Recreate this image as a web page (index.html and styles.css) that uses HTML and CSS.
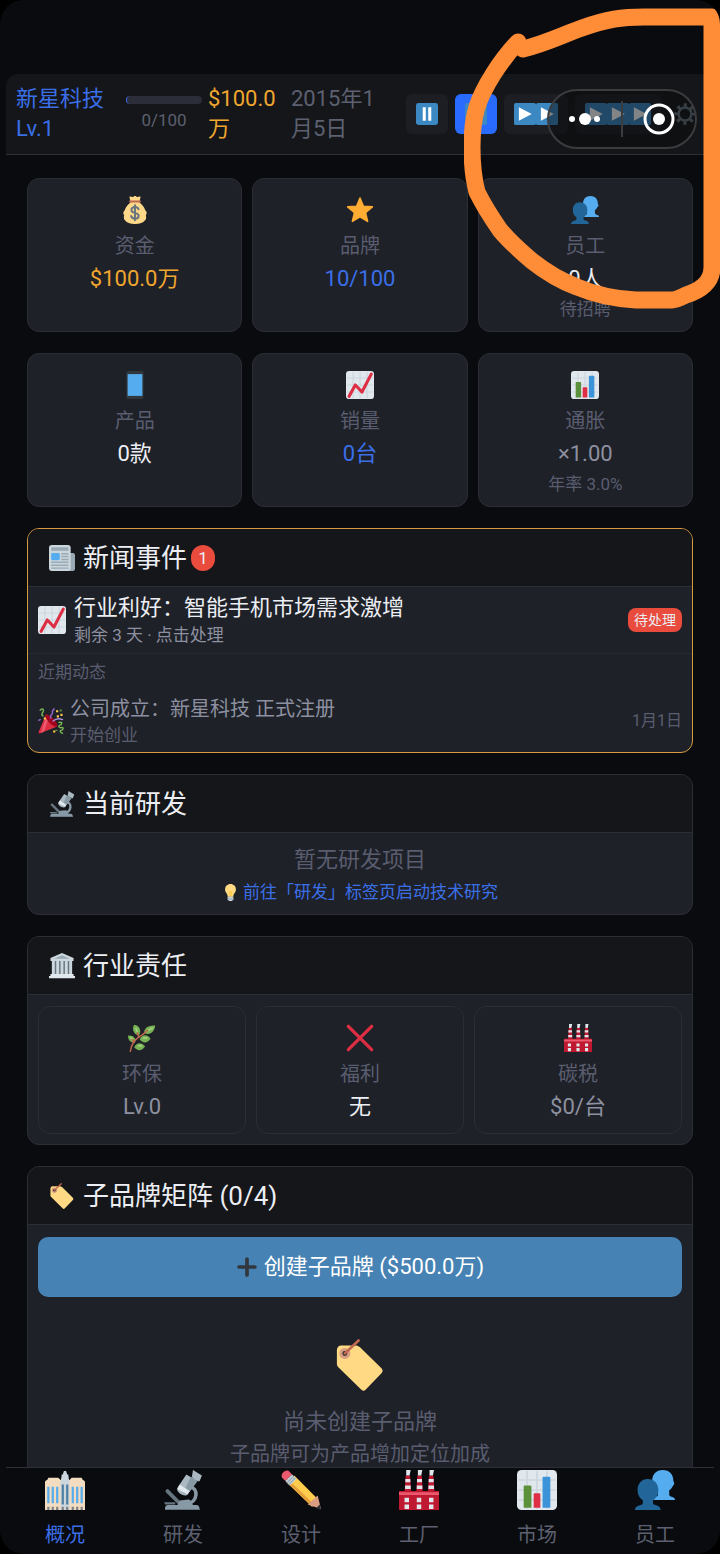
FILE: index.html
```html
<!DOCTYPE html>
<html lang="zh-CN">
<head>
    <meta charset="UTF-8">
    <meta name="viewport" content="width=device-width, initial-scale=1">
    <title>新星科技</title>
    <link rel="stylesheet" href="styles.css">
</head>
<body>
<svg class="sprite" aria-hidden="true">
    <symbol id="i-money" viewBox="0 0 36 36">
        <path fill="#fdd888" d="M31.900 24.300c1 3.200.200 6-1.300 7.300-2 2.900-6 4.400-12.600 4.400S7.400 34.500 5.400 31.600c-1.500-1.300-2.300-4.100-1.300-7.300-1.600-.8-1.500-4.300.5-5.800C6.300 13 11 9.500 13 7.500h10c2 2 6.700 5.500 8.400 11 2 1.500 2.100 5 .5 5.800z"/>
        <path fill="#fdd888" d="M12 6.500 10.800 1c1.700-.9 3 .5 4.200.2 1.200-.3 1.800-1.200 3-1.200s1.800.9 3 1.200c1.200.3 2.500-1.100 4.200-.2L24 6.500z"/>
        <path fill="#bf6952" d="M11.500 5.800h13a1.200 1.200 0 0 1 0 2.400h-13a1.200 1.200 0 0 1 0-2.400z"/>
        <path fill="none" stroke="#67757f" stroke-width="2.600" stroke-linecap="round" d="M22.500 17c-.6-2-2.400-2.800-4.500-2.800-2.700 0-4.600 1.500-4.600 3.700 0 5.300 9.300 2.300 9.300 7.500 0 2.200-2 3.700-4.700 3.700-2.500 0-4.500-1.200-5-3.300M18 11.800v19.500"/>
    </symbol>
    <symbol id="i-star" viewBox="0 0 36 36">
        <path fill="#ffac33" stroke="#ffac33" stroke-width="2" stroke-linejoin="round" d="m18 2.500 4.400 10.600 11.500.9-8.800 7.500 2.700 11.200L18 26.700l-9.800 6 2.700-11.200L2.100 14l11.500-.9z"/>
    </symbol>
    <symbol id="i-people" viewBox="0 0 36 36">
        <path fill="#55acee" d="M15.500 27c0-2.500 3-3 5-3.500V18c-2.500-1-5-4-5-8.500C15.500 4 19 0 25 0s9.500 4 9.500 9.500c0 1 .8 1.500.8 2.500 0 1.500-.8 2-1.300 2.300-.7 1.700-1.800 3-3.200 3.900v3.800c0 1 .5 1.500 1.500 1.900 2 .7 3.700 1.100 3.700 3.100z"/>
        <path fill="#226699" d="M0 36c0-3 3-4 6-4.700.8-.2 1-.8 1-1.800v-2.300C4.200 25.500 2.300 22.500 2.300 18 2.300 12 6 8 11.500 8S21 12 21 18c0 4.500-2 7.500-4.800 9.200v2.300c0 1 .3 1.500 1.300 1.800 3 .7 5.500 1.700 5.500 4.700z"/>
    </symbol>
    <symbol id="i-phone" viewBox="0 0 36 36">
        <rect x="7" y="0" width="22" height="36" rx="2" fill="#31373d"/>
        <path fill="#55acee" d="M8.500 4h19v28h-19z"/>
    </symbol>
    <symbol id="i-up" viewBox="0 0 36 36">
        <rect width="36" height="36" rx="4" fill="#e1e8ed"/>
        <path fill="none" stroke="#ccd6dd" stroke-width="1.500" d="M9 1v34M18 1v34M27 1v34M1 9h34M1 18h34M1 27h34"/>
        <path fill="none" stroke="#dd2e44" stroke-width="4" stroke-linecap="round" stroke-linejoin="round" d="M4 32.500 12 18l8.500 9L32.500 4"/>
    </symbol>
    <symbol id="i-bars" viewBox="0 0 36 36">
        <rect width="36" height="36" rx="4" fill="#e1e8ed"/>
        <path fill="none" stroke="#ccd6dd" stroke-width="1.500" d="M9 1v34M18 1v34M27 1v34M1 9h34M1 18h34M1 27h34"/>
        <path fill="#5c913b" d="M6 15a1 1 0 0 1 1-1h5a1 1 0 0 1 1 1v19H6z"/>
        <path fill="#dd2e44" d="M15 22a1 1 0 0 1 1-1h4a1 1 0 0 1 1 1v12h-6z"/>
        <path fill="#3b94d9" d="M23 7a1 1 0 0 1 1-1h5a1 1 0 0 1 1 1v27h-7z"/>
    </symbol>
    <symbol id="i-news" viewBox="0 0 36 36">
        <path fill="#99aab5" d="M29 11h4a3 3 0 0 1 3 3v19a3 3 0 0 1-3 3H6V20z"/>
        <rect y="0" width="30" height="36" rx="4" fill="#ccd6dd"/>
        <path fill="#99aab5" d="M3 3h24v5H3zM17 11h10v2H17zM17 15h10v2H17zM17 19h10v2H17zM3 23h24v2H3zM3 27h24v2H3zM3 31h24v2H3z"/>
        <rect x="3" y="11" width="12" height="10" rx="2" fill="#55acee"/>
    </symbol>
    <symbol id="i-party" viewBox="0 0 36 36">
        <path fill="#dd2e44" d="M11 9 1 33c-.6 1.600.4 2.600 2 2l23-9c2-3-12-19-15-17z"/>
        <path fill="#ea596e" d="M11 12 4 34.500l4-1.500L14 17z"/>
        <ellipse cx="18.500" cy="17.500" rx="4" ry="11" fill="#a0041e" transform="rotate(-45 18.500 17.500)"/>
        <path fill="none" stroke="#77b255" stroke-width="2" stroke-linecap="round" d="M3 3c4-4 6 0 3 4-1 2-1 3 1 4M29 20c6-1 4 3 1 4s0 4 3 3 2 4-1 4 0 4 2 4"/>
        <path fill="none" stroke="#9266cc" stroke-width="2" stroke-linecap="round" d="M18 14c-3-5 3-4 2-8s3-2 2-5M1 17l2-1"/>
        <path fill="none" stroke="#aa8dd8" stroke-width="2" stroke-linecap="round" d="M21 18c4-4 8-4 13-2"/>
        <path fill="#ffcc4d" d="M25 3h3v3h-3zM31 8h3v3h-3zM26 10h3v3h-3zM8 13h3v3H8zM21 31h3v3h-3z"/>
        <path fill="#5c913b" d="M30 2h3v3h-3zM24 30h3v2h-3z"/>
    </symbol>
    <symbol id="i-scope" viewBox="0 0 36 36">
        <path fill="none" stroke="#66757f" stroke-width="3.400" stroke-linecap="round" d="m4 19 10 10"/>
        <path fill="none" stroke="#8899a6" stroke-width="3.200" d="M24 15c8 1 8 14-3 16"/>
        <path fill="#8899a6" d="M2 36c-.6-3 .4-4.500 3-4.500h8l2-4 8-1c2 0 3 3 4 5h3c2 0 3 1.500 3 4.500z"/>
        <path fill="#66757f" d="M1 29h10v2H2zM2 35h31v1H2z"/>
        <path fill="#aab8c2" d="m21 4 10 6-9 12c-2 3-11-2-9-6z"/>
        <path fill="#8899a6" d="m25 6 6 4-9 12-4-1z"/>
        <path fill="#aab8c2" d="m27 0 8 5-2 5c-1 1-7-3-7-4z"/>
        <path fill="#e1e8ed" d="m15 13 9 6-2 3-9-5z"/>
    </symbol>
    <symbol id="i-bulb" viewBox="0 0 36 36">
        <path fill="#ffd983" d="M29.500 11.500C29.500 5 24.500 0 18 0S6.500 5 6.500 11.500C6.500 18 12 19 12 27h12c0-8 5.500-9 5.500-15.500z"/>
        <path fill="#ffcc4d" d="M14 15h8l-2 12h-4z"/>
        <path fill="#ccd6dd" d="M12 27h12v6l-3 3h-6l-3-3z"/>
        <path fill="#99aab5" d="M12 29h12v1.500H12zM12 32h12v1.500H12z"/>
    </symbol>
    <symbol id="i-bank" viewBox="0 0 36 36">
        <path fill="#ccd6dd" d="M18 0 34 7v4H2V7z"/>
        <path fill="#99aab5" d="m18 3 11 5H7z"/>
        <path fill="#66757f" d="M4 11h28v19H4z"/>
        <path fill="#ccd6dd" d="M4 11h4v19H4zM10 11h4v19h-4zM16 11h4v19h-4zM22 11h4v19h-4zM28 11h4v19h-4z"/>
        <path fill="#e1e8ed" d="M2 29h32v4H2zM0 32h36v3H0z"/>
    </symbol>
    <symbol id="i-herb" viewBox="0 0 36 36">
        <path fill="#77b255" d="M14 15C6 13 5 5 8 1c7 1 10 8 6 14zM21 12c-1-6 5-11 14-10-1 8-6 13-14 10zM15 20c3-7 10-7 14-1-4 6-10 6-14 1zM9 24C3 24 0 20 0 15c7-1 11 4 9 9zM8 30c3-7 10-7 14-1-4 6-10 6-14 1z"/>
        <path fill="none" stroke="#a6d388" stroke-width="2" d="M12 11 10 5M26 8l6-3M19 18h6M6 20l-3-3M13 28h5"/>
        <path fill="none" stroke="#c1694f" stroke-width="2" stroke-linecap="round" d="M3 35c1-8 6-15 12-19 4-2 7-5 10-8M14 17l-2-6M8 23l-3-3"/>
    </symbol>
    <symbol id="i-cross" viewBox="0 0 36 36">
        <path stroke="#dd2e44" stroke-width="4.200" stroke-linecap="round" d="m3 3 30 30M33 3 3 33"/>
    </symbol>
    <symbol id="i-factory" viewBox="0 0 36 36">
        <path fill="#be1931" d="M6 5h4l1 15H5zM16.500 5h4l1 15h-6zM27 5h4l1 15h-6z"/>
        <path fill="#e1e8ed" d="M6.500 0h4l-1 5h-3zM17 0h4l-1 5h-3zM27.500 0h4l-1 5h-3zM5.700 8h4.500v3H5.700zM5.500 14h5v3h-5zM16.200 8h4.500v3h-4.500zM16 14h5v3h-5zM26.700 8h4.500v3h-4.500zM26.500 14h5v3h-5z"/>
        <path fill="#be1931" d="M0 19h36v17H0z"/>
        <path fill="#ea596e" d="M0 20h36v2.500H0z"/>
        <path fill="#e1e8ed" d="M5 25h4v4H5zM16 25h4v4h-4zM27 25h4v4h-4zM5 31h4v4H5zM16 31h4v4h-4zM27 31h4v4h-4z"/>
    </symbol>
    <symbol id="i-tag" viewBox="0 0 36 36">
        <path fill="#ffd983" d="M2 7.500A3 3 0 0 1 5 4.500h10c1 0 2 .3 3 1.200L32.700 20c1.300 1.300 1.300 2.500 0 3.800L22 35c-1 1.200-2 1.200-3.200 0L3 19.500a3 3 0 0 1-1-2.300z"/>
        <circle cx="7.500" cy="10" r="3.800" fill="#d99e82"/>
        <circle cx="7.500" cy="10" r="1.700" fill="#292f33"/>
        <path fill="none" stroke="#c1694f" stroke-width="1.800" stroke-linecap="round" d="m7.500 10 9.500-9"/>
    </symbol>
    <symbol id="i-plus" viewBox="0 0 36 36">
        <path stroke="#31373d" stroke-width="6" stroke-linecap="round" d="M18 5v26M5 18h26"/>
    </symbol>
    <symbol id="i-office" viewBox="0 0 36 36">
        <path fill="#f3dcc0" d="M0 11c0-1 1-2 2-2l1-2h9l2 2h8l2-2h9l1 2c1 0 2 1 2 2v25H0z"/>
        <path fill="#ccd6dd" d="M14 12c0-3 1-5 1-8h1l1-3h2l1 3h1c0 3 1 5 1 8v24h-8z"/>
        <path fill="#55acee" d="M2 15h2v15H2zM6 15h2v15H6zM10 15h2v15h-2zM24 15h2v15h-2zM28 15h2v15h-2zM32 15h2v15h-2z"/>
        <path fill="#4f7fa3" d="M15 13h2v18h-2zM19 13h2v18h-2z"/>
        <path fill="#808285" d="M2 33h2v3H2zM6 33h2v3H6zM10 33h2v3h-2zM15 33h2v3h-2zM19 33h2v3h-2zM24 33h2v3h-2zM28 33h2v3h-2zM32 33h2v3h-2z"/>
    </symbol>
    <symbol id="i-pencil" viewBox="0 0 36 36">
        <path fill="#ffcc4d" d="m5 11 7-6 21 21-5 7z"/>
        <path fill="#e6a03c" d="m5 11 2-2 23 22-2 2z"/>
        <path fill="#d99e82" d="m33 23 3 12-12-4z"/>
        <path fill="#292f33" d="m36 36-4.500-1.500L35 31z"/>
        <path fill="#ea596e" d="M1 7C-1 4 4-1 7 1l3 3-6 6z"/>
        <path fill="#ccd6dd" d="m4 10 6-6 4 4-6 6z"/>
        <path fill="none" stroke="#99aab5" stroke-width="1.200" d="m5.500 11.500 6-6M7 13l6-6"/>
    </symbol>
    <symbol id="i-pause" viewBox="0 0 36 36">
        <rect width="36" height="36" rx="4" fill="#3b88c3"/>
        <path fill="#fff" d="M11 7h5v22h-5zM20 7h5v22h-5z"/>
    </symbol>
    <symbol id="i-play" viewBox="0 0 36 36">
        <rect width="36" height="36" rx="3" fill="#3b88c3"/>
        <path fill="#fff" d="m8 7 21 11L8 29z"/>
    </symbol>
    <symbol id="i-gear" viewBox="0 0 36 36">
        <circle cx="18" cy="18" r="10.500" fill="none" stroke="#66757f" stroke-width="4"/>
        <circle cx="18" cy="18" r="14.500" fill="none" stroke="#66757f" stroke-width="6" stroke-dasharray="5 6.390" stroke-dashoffset="2.500"/>
    </symbol>
</svg>

<div class="app">
    <header class="topbar">
        <div class="company">新星科技 Lv.1</div>
        <div class="exp">
            <div class="exp-bar"></div>
            <div class="exp-text">0/100</div>
        </div>
        <div class="money">$100.0万</div>
        <div class="date">2015年1月5日</div>
        <div class="speed">
            <button class="speed-btn" aria-label="暂停"><svg><use href="#i-pause"/></svg></button>
            <button class="speed-btn active" aria-label="播放"><svg><use href="#i-play"/></svg></button>
            <button class="speed-btn" aria-label="快进"><svg><use href="#i-play"/></svg><svg><use href="#i-play"/></svg></button>
            <button class="speed-btn" aria-label="极速"><svg><use href="#i-play"/></svg><svg><use href="#i-play"/></svg><svg><use href="#i-play"/></svg></button>
            <button class="gear" aria-label="设置"><svg><use href="#i-gear"/></svg></button>
        </div>
    </header>

    <main class="content">
        <section class="stats">
            <div class="stat"><svg><use href="#i-money"/></svg><div class="label">资金</div><div class="value gold">$100.0万</div></div>
            <div class="stat"><svg><use href="#i-star"/></svg><div class="label">品牌</div><div class="value blue">10/100</div></div>
            <div class="stat"><svg><use href="#i-people"/></svg><div class="label">员工</div><div class="value">0人</div><div class="sub">待招聘</div></div>
            <div class="stat"><svg><use href="#i-phone"/></svg><div class="label">产品</div><div class="value">0款</div></div>
            <div class="stat"><svg><use href="#i-up"/></svg><div class="label">销量</div><div class="value blue">0台</div></div>
            <div class="stat"><svg><use href="#i-bars"/></svg><div class="label">通胀</div><div class="value dim">×1.00</div><div class="sub">年率 3.0%</div></div>
        </section>

        <section class="card news">
            <h2><svg><use href="#i-news"/></svg>新闻事件<span class="count">1</span></h2>
            <div class="event">
                <svg><use href="#i-up"/></svg>
                <div class="event-body">
                    <div class="event-title">行业利好：智能手机市场需求激增</div>
                    <div class="event-sub">剩余 3 天 · 点击处理</div>
                </div>
                <span class="tag">待处理</span>
            </div>
            <div class="recent">近期动态</div>
            <div class="event old">
                <svg><use href="#i-party"/></svg>
                <div class="event-body">
                    <div class="event-title">公司成立：新星科技 正式注册</div>
                    <div class="event-sub">开始创业</div>
                </div>
                <span class="day">1月1日</span>
            </div>
        </section>

        <section class="card">
            <h2><svg><use href="#i-scope"/></svg>当前研发</h2>
            <div class="research">
                <p>暂无研发项目</p>
                <a href="#research"><svg><use href="#i-bulb"/></svg>前往「研发」标签页启动技术研究</a>
            </div>
        </section>

        <section class="card">
            <h2><svg><use href="#i-bank"/></svg>行业责任</h2>
            <div class="duty">
                <div class="stat"><svg><use href="#i-herb"/></svg><div class="label">环保</div><div class="value dim">Lv.0</div></div>
                <div class="stat"><svg><use href="#i-cross"/></svg><div class="label">福利</div><div class="value">无</div></div>
                <div class="stat"><svg><use href="#i-factory"/></svg><div class="label">碳税</div><div class="value dim">$0/台</div></div>
            </div>
        </section>

        <section class="card">
            <h2><svg><use href="#i-tag"/></svg>子品牌矩阵 (0/4)</h2>
            <div class="brands">
                <button class="create"><svg><use href="#i-plus"/></svg>创建子品牌 ($500.0万)</button>
                <div class="empty">
                    <svg><use href="#i-tag"/></svg>
                    <p>尚未创建子品牌</p>
                    <p class="hint">子品牌可为产品增加定位加成</p>
                </div>
            </div>
        </section>
    </main>

    <nav class="tabs">
        <a class="active" href="#home"><svg><use href="#i-office"/></svg>概况</a>
        <a href="#research"><svg><use href="#i-scope"/></svg>研发</a>
        <a href="#design"><svg><use href="#i-pencil"/></svg>设计</a>
        <a href="#factory"><svg><use href="#i-factory"/></svg>工厂</a>
        <a href="#market"><svg><use href="#i-bars"/></svg>市场</a>
        <a href="#staff"><svg><use href="#i-people"/></svg>员工</a>
    </nav>

    <div class="capsule">
        <button aria-label="更多"><svg viewBox="0 0 36 36"><g fill="#fff"><circle cx="5" cy="18" r="3"/><circle cx="18" cy="18" r="6"/><circle cx="30" cy="18" r="3"/></g></svg></button>
        <button aria-label="关闭"><svg viewBox="0 0 36 36"><circle cx="18" cy="18" r="14" fill="none" stroke="#fff" stroke-width="3"/><circle cx="18" cy="18" r="6" fill="#fff"/></svg></button>
    </div>
    <svg class="scribble" viewBox="0 0 256 312" aria-hidden="true">
        <path d="M59 49C83 43 98 35 118 28C143 19 158 17 180 17H248V267C248 284 234 291 222 295C216 298 212 300 208 300H172C151 299 132 295 113 287C94 280 82 272 68 261C55 250 46 242 36 230C27 217 20 206 13 192C9 177 8 163 8 147C8 130 10 117 13 107C19 88 36 61 54 42"/>
    </svg>
</div>
</body>
</html>
```
FILE: styles.css
```css
* {
    box-sizing: border-box;
}
body {
    margin: 0;
    background: #000;
    color: #eceef4;
    font-family: Roboto, "Noto Sans CJK SC", sans-serif;
    font-size: 22px;
    line-height: 30px;
}
h2, p {
    margin: 0;
    font-weight: normal;
}
a {
    color: inherit;
    text-decoration: none;
}
button {
    border: 0;
    padding: 0;
    font: inherit;
    color: inherit;
    cursor: pointer;
}
svg {
    display: block;
    flex: none;
}
.sprite {
    position: absolute;
    width: 0;
    height: 0;
}
.app {
    position: relative;
    display: flex;
    flex-direction: column;
    height: 100vh;
    padding: 74px 6px 0;
    background: #090b0e;
    border-radius: 24px;
    overflow: hidden;
}

/* top bar */
.topbar {
    display: flex;
    align-items: center;
    padding: 10px;
    background: #141619;
    border-bottom: 1px solid #2c2f36;
    border-radius: 12px 12px 0 0;
}
.company {
    flex: 0 1 110px;
    padding-right: 20px;
    color: #3b6fe8;
}
.exp {
    flex: 0 1 76px;
    text-align: center;
    font-size: 17px;
    line-height: 24px;
    color: #5d6070;
}
.exp-bar {
    height: 8px;
    margin-bottom: 4px;
    border-left: 1px solid #3b6fe8;
    border-radius: 4px;
    background: #2b2d38;
}
.money {
    flex: 0 1 77px;
    margin-left: 6px;
    color: #f0a62f;
}
.date {
    flex: 0 1 90px;
    margin-left: 6px;
    color: #5d6070;
}
.speed {
    display: flex;
    align-items: center;
    gap: 7px;
    margin-left: auto;
}
.speed svg {
    width: 22px;
    height: 22px;
}
.speed-btn {
    display: flex;
    align-items: center;
    height: 40px;
    padding: 0 10px;
    border-radius: 6px;
    background: #1c1e24;
}
.speed-btn.active {
    background: #2a6bff;
}
.gear {
    padding: 0 8px 0 6px;
    background: none;
}

/* content */
.content {
    flex: 1;
    min-height: 0;
    padding: 23px 21px 0;
    overflow-y: auto;
    scrollbar-width: none;
}
.stats {
    display: grid;
    grid-template-columns: repeat(3, 1fr);
    gap: 21px 10px;
}
.stat {
    display: flex;
    flex-direction: column;
    align-items: center;
    padding: 17px 10px 11px;
    border: 1px solid #2b2e35;
    border-radius: 12px;
    background: #1e2127;
}
.stat svg {
    width: 28px;
    height: 28px;
    margin-bottom: 8px;
}
.label {
    margin-bottom: 4px;
    font-size: 20px;
    line-height: 28px;
    color: #5a5d70;
}
.value.gold { color: #f0a62f; }
.value.blue { color: #3b6fe8; }
.value.dim { color: #8d90a0; }
.sub {
    margin-top: 4px;
    font-size: 17px;
    line-height: 22px;
    color: #5a5d70;
}

.card {
    margin-top: 21px;
    border: 1px solid #2b2e35;
    border-radius: 12px;
    background: #1e2127;
    overflow: hidden;
}
.card h2 {
    display: flex;
    align-items: center;
    height: 58px;
    padding: 0 21px;
    border-bottom: 1px solid #2b2e35;
    background: #141619;
    font-size: 26px;
}
.card h2 svg {
    width: 26px;
    height: 26px;
    margin-right: 8px;
}
.count {
    width: 24px;
    margin-left: 4px;
    border-radius: 12px;
    background: #e94b3c;
    font-size: 17px;
    line-height: 26px;
    text-align: center;
}

/* news */
.news {
    border-color: #d79a3e;
}
.event {
    display: flex;
    align-items: center;
    gap: 8px;
    padding: 6px 10px;
    border-bottom: 1px solid #262a30;
}
.event svg {
    width: 28px;
    height: 28px;
}
.event-body {
    flex: 1;
}
.event-sub {
    font-size: 17px;
    line-height: 24px;
    color: #8d90a0;
}
.tag {
    padding: 0 6px;
    border-radius: 8px;
    background: #e94b3c;
    font-size: 14px;
    line-height: 24px;
}
.recent {
    padding: 6px 10px;
    font-size: 17px;
    line-height: 24px;
    color: #5a5d70;
}
.event.old {
    gap: 6px;
    padding: 5px 10px;
    border-bottom: 0;
}
.old svg {
    width: 26px;
    height: 26px;
}
.old .event-title {
    font-size: 20px;
    line-height: 28px;
    color: #8d90a0;
}
.old .event-sub {
    color: #5a5d70;
}
.day {
    font-size: 16px;
    color: #5a5d70;
}

.research {
    display: flex;
    flex-direction: column;
    align-items: center;
    gap: 2px;
    padding: 12px 10px 7px;
    color: #5a5d70;
}
.research a {
    display: flex;
    align-items: center;
    gap: 4px;
    font-size: 17px;
    color: #3b6fe8;
}
.research svg {
    width: 17px;
    height: 17px;
}

.duty {
    display: grid;
    grid-template-columns: repeat(3, 1fr);
    gap: 10px;
    padding: 11px 10px 10px;
}

/* sub brands */
.brands {
    padding: 12px 10px;
}
.create {
    display: flex;
    align-items: center;
    justify-content: center;
    gap: 6px;
    width: 100%;
    height: 60px;
    border-radius: 10px;
    background: #4682b4;
    color: #fff;
}
.create svg {
    width: 22px;
    height: 22px;
}
.empty {
    display: flex;
    flex-direction: column;
    align-items: center;
    gap: 6px;
    padding: 42px 0;
    color: #5a5d70;
}
.empty svg {
    width: 52px;
    height: 52px;
    margin-bottom: 10px;
}
.hint {
    font-size: 20px;
    line-height: 22px;
}

/* bottom tabs */
.tabs {
    display: flex;
    height: 87px;
    border-top: 1px solid #2c2f36;
}
.tabs a {
    flex: 1;
    display: flex;
    flex-direction: column;
    align-items: center;
    gap: 10px;
    padding-top: 2px;
    font-size: 20px;
    color: #5d6070;
}
.tabs svg {
    width: 40px;
    height: 40px;
}
.tabs .active {
    color: #3b6fe8;
}

/* mini program menu, floats over the top bar */
.capsule {
    position: absolute;
    top: 89px;
    right: 23px;
    display: flex;
    align-items: center;
    width: 150px;
    height: 60px;
    border: 2px solid #3b3c3e;
    border-radius: 30px;
    background: rgba(8, 9, 11, 0.5);
}
.capsule button {
    flex: 1;
    display: flex;
    justify-content: center;
    background: none;
}
.capsule button + button {
    border-left: 2px solid #3b3c3e;
}
.capsule svg {
    width: 36px;
    height: 36px;
}
.scribble {
    position: absolute;
    top: 0;
    right: 0;
    width: 256px;
    height: 312px;
    pointer-events: none;
}
.scribble path {
    fill: none;
    stroke: #ff8c37;
    stroke-width: 17;
    stroke-linecap: round;
    stroke-linejoin: round;
}
```
